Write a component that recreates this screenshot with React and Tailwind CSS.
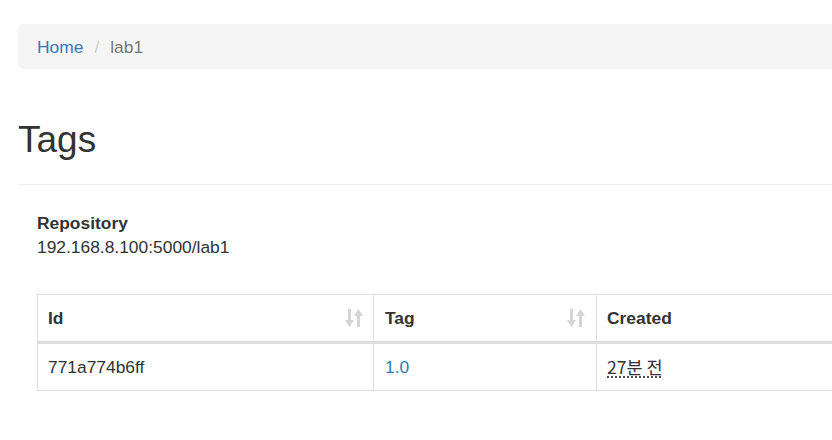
import React from 'react';

const font = { fontFamily: '"Liberation Sans", Arial, "Noto Sans CJK KR", sans-serif' };

function SortIcon() {
  return (
    <svg width="18" height="20" viewBox="0 0 18 20" className="text-[#d5d5d5]" fill="currentColor">
      {/* down arrow */}
      <rect x="3" y="1" width="3" height="13" />
      <polygon points="0,12 9,12 4.5,19" />
      {/* up arrow */}
      <rect x="12" y="6" width="3" height="13" />
      <polygon points="9,8 18,8 13.5,1" />
    </svg>
  );
}

export default function App() {
  const rows = [{ id: '771a774b6ff', tag: '1.0', created: '27분 전' }];

  return (
    <div className="w-full min-h-screen bg-white overflow-hidden text-[#333] text-[17.4px] leading-[24px]" style={font}>
      <div className="w-[1200px] px-[18px] pt-[24px]">
        {/* Breadcrumb */}
        <ol className="flex items-center bg-[#f5f5f5] rounded-[5px] px-[19px] py-[10.5px]">
          <li><a href="#" className="text-[#337ab7]">Home</a></li>
          <li className="flex items-center">
            <span className="text-[#ccc] ml-[11px] mr-[11px]">/</span>
            <span className="text-[#777]">lab1</span>
          </li>
        </ol>

        {/* Page header */}
        <div className="mt-[51px] border-b border-[#eee] pb-[24px]">
          <h1 className="text-[37px] leading-[40px] font-normal">Tags</h1>
        </div>

        <div className="px-[19px]">
          <div className="mt-[26px]">
            <div className="font-bold">Repository</div>
            <div>192.168.8.100:5000/lab1</div>
          </div>

          {/* Table */}
          <table className="mt-[35px] border-collapse border border-[#ddd] w-[1000px]">
            <thead>
              <tr>
                <th className="w-[336px] border border-[#ddd] border-b-[3px] text-left font-bold px-[10px] py-[11px]">
                  <div className="flex items-center justify-between">
                    <span>Id</span>
                    <SortIcon />
                  </div>
                </th>
                <th className="w-[223px] border border-[#ddd] border-b-[3px] text-left font-bold px-[11px] py-[11px]">
                  <div className="flex items-center justify-between">
                    <span>Tag</span>
                    <SortIcon />
                  </div>
                </th>
                <th className="border border-[#ddd] border-b-[3px] text-left font-bold px-[10px] py-[11px]">Created</th>
              </tr>
            </thead>
            <tbody>
              {rows.map((r) => (
                <tr key={r.id}>
                  <td className="border border-[#ddd] px-[10px] py-[10.5px]">{r.id}</td>
                  <td className="border border-[#ddd] px-[11px] py-[10.5px]">
                    <a href="#" className="text-[#337ab7]">{r.tag}</a>
                  </td>
                  <td className="border border-[#ddd] px-[10px] py-[10.5px]">
                    <abbr title="" className="underline decoration-dotted underline-offset-[3px]" style={{ fontFamily: '"Noto Sans CJK KR", "Liberation Sans", sans-serif', fontSize: '17.5px' }}>
                      {r.created}
                    </abbr>
                  </td>
                </tr>
              ))}
            </tbody>
          </table>
        </div>
      </div>
    </div>
  );
}
